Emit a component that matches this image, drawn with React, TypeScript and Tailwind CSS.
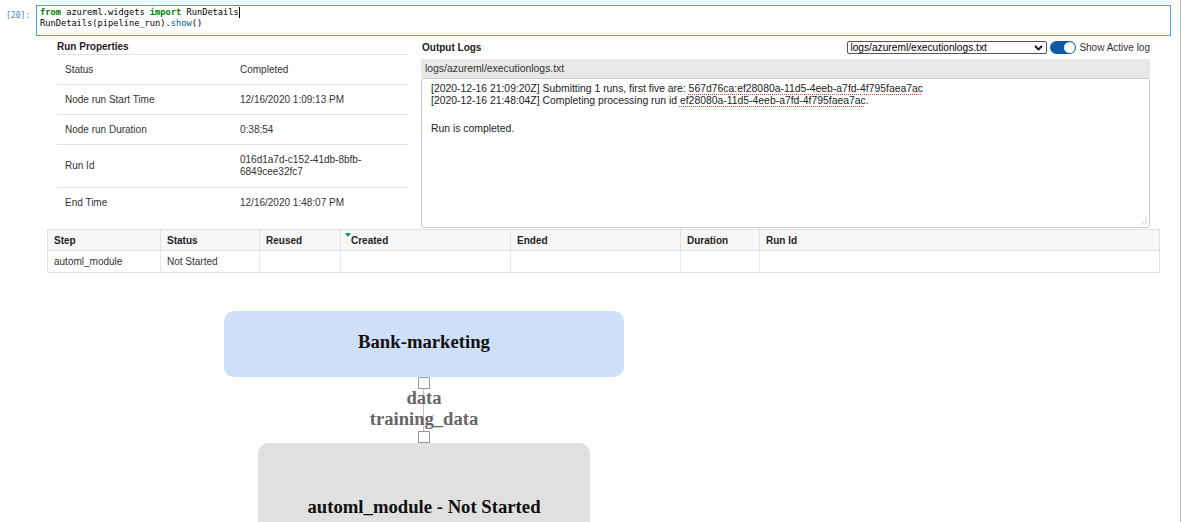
import React from 'react';

const props: [string, string[]][] = [
  ['Status', ['Completed']],
  ['Node run Start Time', ['12/16/2020 1:09:13 PM']],
  ['Node run Duration', ['0:38:54']],
  ['Run Id', ['016d1a7d-c152-41db-8bfb-', '6849cee32fc7']],
  ['End Time', ['12/16/2020 1:48:07 PM']],
];

const cols = [
  { name: 'Step', w: 'w-[113px]', val: 'automl_module' },
  { name: 'Status', w: 'w-[99px]', val: 'Not Started' },
  { name: 'Reused', w: 'w-[81px]', val: '' },
  { name: 'Created', w: 'w-[170px]', val: '', sorted: true },
  { name: 'Ended', w: 'w-[170px]', val: '' },
  { name: 'Duration', w: 'w-[79px]', val: '' },
  { name: 'Run Id', w: 'flex-1', val: '' },
];

const Squiggle = ({ children }: { children: React.ReactNode }) => (
  <span className="underline decoration-dotted decoration-[#e5484d] underline-offset-[2px]">{children}</span>
);

const Port = () => <div className="w-[12px] h-[12px] border border-[#999] bg-white relative z-10" />;

export default function App() {
  return (
    <div
      className="relative w-[1181px] h-[522px] overflow-hidden bg-white border-r border-[#b8b8b8] text-[#333]"
      style={{ fontFamily: '"Liberation Sans", Arial, sans-serif' }}
    >
      {/* code cell */}
      <div className="flex pt-[5px]">
        <div
          className="w-[36px] pl-[6px] pt-[5px] text-[8px] leading-[11px] text-[#3f7fcf]"
          style={{ fontFamily: '"DejaVu Sans Mono", monospace' }}
        >
          [20]:
        </div>
        <div
          className="w-[1135px] h-[31px] border border-[#42a5f5] pl-[3px] pt-[1px] text-[8.7px] leading-[11px] text-black"
          style={{ fontFamily: '"DejaVu Sans Mono", monospace' }}
        >
          <div>
            <span className="font-bold text-[#008000]">from</span> azureml.widgets{' '}
            <span className="font-bold text-[#008000]">import</span> RunDetails
            <span className="inline-block w-px h-[11px] bg-black align-top" />
          </div>
          <div>
            RunDetails(pipeline_run).<span className="text-[#0055aa]">show</span>()
          </div>
        </div>
      </div>

      {/* widget */}
      <div className="ml-[47px] w-[1113px]">
        <div className="flex pl-[10px] gap-[13px]">
          {/* run properties */}
          <div className="w-[351px]">
            <div className="pt-[5px] leading-[12px] pb-[1px] border-b border-[#e2e2e2] text-[10px] font-bold text-[#222]">
              Run Properties
            </div>
            {props.map(([k, v], i) => (
              <div
                key={k}
                className={`flex items-center pl-[8px] text-[10px] leading-[12px] ${
                  v.length > 1 ? 'h-[43px]' : 'h-[30px]'
                } ${i < props.length - 1 ? 'border-b border-[#e2e2e2]' : ''}`}
              >
                <div className="w-[175px]">{k}</div>
                <div>
                  {v.map((l) => (
                    <div key={l}>{l}</div>
                  ))}
                </div>
              </div>
            ))}
          </div>

          {/* output logs */}
          <div className="w-[729px]">
            <div className="h-[23px] flex items-center justify-between">
              <div className="pl-[1px] text-[10px] font-bold text-[#222]">Output Logs</div>
              <div className="flex items-center">
                <div className="w-[200px] h-[13px] border border-[#555] rounded-[2px] flex items-center justify-between pl-[2px] pr-[3px] text-[10.2px] leading-[11px] text-black">
                  <span>logs/azureml/executionlogs.txt</span>
                  <svg width="9" height="6" viewBox="0 0 9 6">
                    <path d="M1 1l3.5 3.5L8 1" fill="none" stroke="#111" strokeWidth="1.9" />
                  </svg>
                </div>
                <div className="ml-[3px] w-[26px] h-[13px] rounded-full bg-[#0b5ba8] flex items-center justify-end pr-[1px]">
                  <div className="w-[11px] h-[11px] rounded-full bg-white" />
                </div>
                <div className="ml-[3px] text-[10px] leading-[12px]">Show Active log</div>
              </div>
            </div>
            <div className="h-[19px] bg-[#e8e8e8] pl-[4px] flex items-center text-[10.4px]">
              logs/azureml/executionlogs.txt
            </div>
            <div className="relative h-[150px] border border-[#cacaca] rounded-[3px] px-[9px] pt-[4px] text-[10.4px] leading-[12px] text-[#222]">
              <div>
                [2020-12-16 21:09:20Z] Submitting 1 runs, first five are:{' '}
                <Squiggle>567d76ca:ef28080a-11d5-4eeb-a7fd-4f795faea7ac</Squiggle>
              </div>
              <div>
                [2020-12-16 21:48:04Z] Completing processing run id{' '}
                <Squiggle>ef28080a-11d5-4eeb-a7fd-4f795faea7ac</Squiggle>.
              </div>
              <div className="mt-[16px]">Run is completed.</div>
              <svg className="absolute right-[1px] bottom-[1px]" width="8" height="8" viewBox="0 0 8 8">
                <path d="M7 1L1 7M7 4L4 7" stroke="#777" strokeWidth="0.8" strokeDasharray="1 1" />
              </svg>
            </div>
          </div>
        </div>

        {/* steps table */}
        <div className="mt-[1px] border border-[#e0e0e0] text-[10px]">
          <div className="flex h-[21px] bg-[#f7f7f7] border-b border-[#e0e0e0] font-bold text-[#222]">
            {cols.map((c, i) => (
              <div
                key={c.name}
                className={`relative ${c.w} flex items-center pl-[6px] ${
                  i < cols.length - 1 ? 'border-r border-[#e0e0e0]' : ''
                }`}
              >
                {c.sorted && (
                  <span className="absolute left-[4px] top-[3px] w-0 h-0 border-l-[3px] border-r-[3px] border-t-[4px] border-l-transparent border-r-transparent border-t-[#1a9850]" />
                )}
                <span className={c.sorted ? 'pl-[5px] -ml-[1px]' : ''}>{c.name}</span>
              </div>
            ))}
          </div>
          <div className="flex h-[21px]">
            {cols.map((c, i) => (
              <div
                key={c.name}
                className={`${c.w} flex items-center pl-[6px] ${
                  i < cols.length - 1 ? 'border-r border-[#e8e8e8]' : ''
                }`}
              >
                {c.val}
              </div>
            ))}
          </div>
        </div>
      </div>

      {/* pipeline graph */}
      <div
        className="ml-[224px] mt-[38px] w-[400px] flex flex-col items-center font-bold"
        style={{ fontFamily: '"Liberation Serif", "Times New Roman", serif' }}
      >
        <div className="w-[400px] h-[66px] rounded-[10px] bg-[#cedff7] flex items-center justify-center pb-[4px] text-[18.7px] text-[#111]">
          Bank-marketing
        </div>
        <Port />
        <div className="relative h-[42px] w-[400px] flex flex-col items-center">
          <div className="absolute left-[199px] top-0 w-px h-full bg-[#c4c4c4]" />
          <div className="relative -mt-[2px] text-[18.6px] leading-[21px] text-[#666] text-center">
            <div>data</div>
            <div>training_data</div>
          </div>
        </div>
        <Port />
        <div className="w-[332px] h-[128px] rounded-[10px] bg-[#e0e0e0] flex items-center justify-center text-[18.7px] text-[#111]">
          automl_module - Not Started
        </div>
      </div>
    </div>
  );
}
